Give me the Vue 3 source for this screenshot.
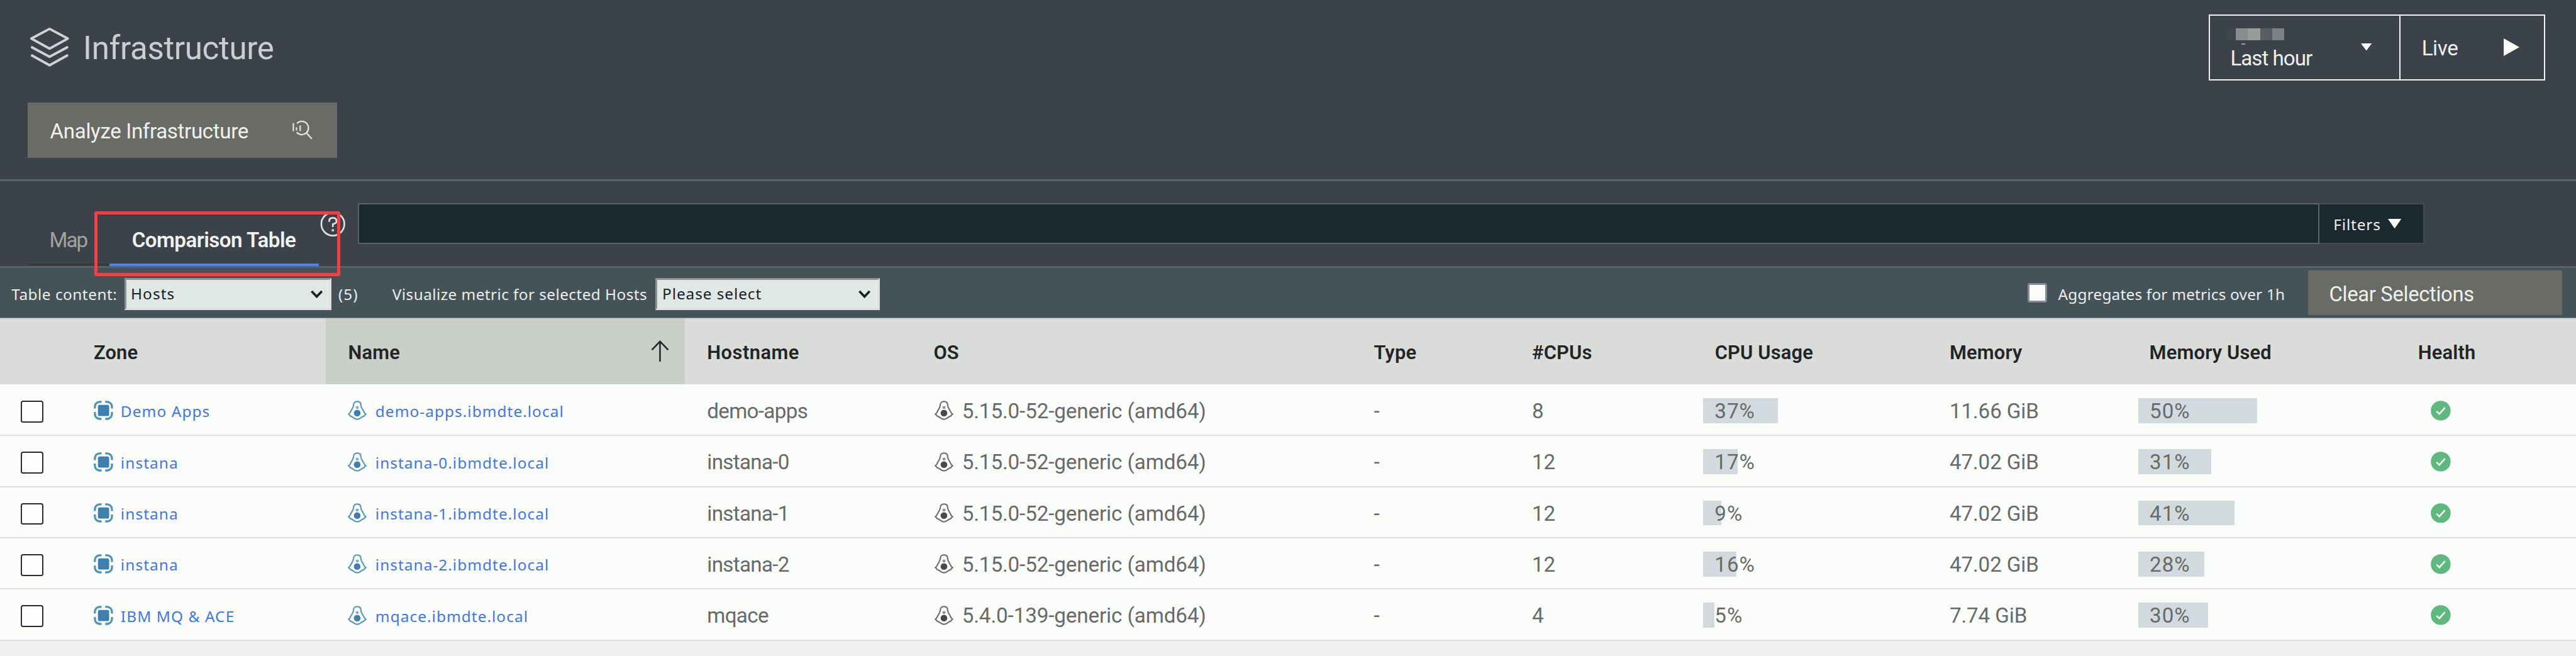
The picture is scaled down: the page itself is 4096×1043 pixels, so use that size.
<script setup>
const columns = [
  { label: 'Zone' }, { label: 'Name', sorted: true }, { label: 'Hostname', cls: 'wide' }, { label: 'OS' },
  { label: 'Type' }, { label: '#CPUs' }, { label: 'CPU Usage' }, { label: 'Memory' },
  { label: 'Memory Used' }, { label: 'Health' },
]
const hosts = [
  { zone: 'Demo Apps', host: 'demo-apps', os: '5.15.0-52-generic (amd64)', cpus: 8, cpu: 37, cpuFill: 36.8, mem: '11.66 GiB', used: 50, usedFill: 50.2 },
  { zone: 'instana', host: 'instana-0', os: '5.15.0-52-generic (amd64)', cpus: 12, cpu: 17, cpuFill: 17.1, mem: '47.02 GiB', used: 31, usedFill: 30.9 },
  { zone: 'instana', host: 'instana-1', os: '5.15.0-52-generic (amd64)', cpus: 12, cpu: 9, cpuFill: 8.95, mem: '47.02 GiB', used: 41, usedFill: 40.8 },
  { zone: 'instana', host: 'instana-2', os: '5.15.0-52-generic (amd64)', cpus: 12, cpu: 16, cpuFill: 16.4, mem: '47.02 GiB', used: 28, usedFill: 28 },
  { zone: 'IBM MQ & ACE', host: 'mqace', os: '5.4.0-139-generic (amd64)', cpus: 4, cpu: 5, cpuFill: 5.5, mem: '7.74 GiB', used: 30, usedFill: 29.7 },
]
const pixels = ['#3e454c', '#888b90', '#989d9b', '#565e61', '#7d8284']
const penguin = 'M9.5 7C9.5 3.4 12 1.5 15.5 1.5S21.500 3.400 21.500 7C21.500 11.500 24.500 14 26.300 17.800C27 19.500 27 20.500 29.600 22.200C27.500 23.300 28 25.600 25.300 26C22 26.800 20.300 30.700 15.500 30.700S9 26.800 5.700 26C3 25.600 3.500 23.300 1.400 22.200C4 20.500 4 19.500 4.700 17.800C6.500 14 9.500 11.500 9.500 7Z'
</script>

<template>
  <div class="page">
    <header class="header">
      <div class="lead">
        <div class="title">
          <svg class="layers" width="66" height="66" viewBox="0 0 66 66" fill="none" stroke="#d0d3d5" stroke-width="4" stroke-linejoin="round" stroke-linecap="round">
            <path d="M33 3L63 19L33 35.500L3 19Z" />
            <path d="M4 33.500L33 49L62 33.500" />
            <path d="M4 47L33 63L62 47" />
          </svg>
          <h1>Infrastructure</h1>
        </div>
        <button class="analyze">
          <span>Analyze Infrastructure</span>
          <svg width="36" height="36" viewBox="0 0 36 36" fill="none" stroke="#e3e5e2" stroke-width="2.300">
            <path d="M8.500 7.500A11 11 0 1 1 8 22" />
            <path d="M24.500 23.500L33 33" />
            <path d="M2.500 7V20.500M13.800 11V20M7.800 14V19" />
          </svg>
        </button>
      </div>
      <div class="time">
        <div class="range">
          <div class="range-text">
            <div class="pixels"><i v-for="p in pixels" :key="p" :style="{ background: p }"></i></div>
            <div class="tick"></div>
            <span>Last hour</span>
          </div>
          <svg width="18" height="12" viewBox="0 0 18 12"><path d="M0 0H18L9 12Z" fill="#fbfcfa" /></svg>
        </div>
        <div class="live">
          <span>Live</span>
          <svg width="26" height="29" viewBox="0 0 26 29"><path d="M0 0L26 14.500L0 29Z" fill="#fbfcfa" /></svg>
        </div>
      </div>
    </header>

    <nav class="tabs">
      <div class="tab map">Map</div>
      <div class="tab active">Comparison Table</div>
      <svg class="help" width="42" height="42" viewBox="0 0 42 42" fill="none" stroke="#dfe2e2" stroke-width="2.800">
        <circle cx="21" cy="21" r="19" />
        <path d="M15 17.500V16C15 13 17 10.800 21 10.800S27 13 27 16.200C27 19.800 23.500 20.800 21 21.200V26" />
        <path d="M21 29.500V33" stroke-width="3.600" />
      </svg>
      <div class="search"></div>
      <div class="filters">
        <span>Filters</span>
        <svg width="22" height="16" viewBox="0 0 22 16"><path d="M0 0H22L11 16Z" fill="#fbfcfa" /></svg>
      </div>
      <div class="highlight"></div>
    </nav>

    <section class="toolbar">
      <label class="l-content">Table content:</label>
      <div class="select hosts">
        <span>Hosts</span>
        <svg width="20" height="14" viewBox="0 0 20 14" fill="none" stroke="#1c1e1f" stroke-width="3.800"><path d="M1.500 2L10 11L18.500 2" /></svg>
      </div>
      <span class="count">(5)</span>
      <label class="l-metric">Visualize metric for selected Hosts</label>
      <div class="select metric">
        <span>Please select</span>
        <svg width="20" height="14" viewBox="0 0 20 14" fill="none" stroke="#1c1e1f" stroke-width="3.800"><path d="M1.500 2L10 11L18.500 2" /></svg>
      </div>
      <i class="agg-box"></i>
      <label class="l-agg">Aggregates for metrics over 1h</label>
      <button class="clear">Clear Selections</button>
    </section>

    <main class="table">
      <div class="thead">
        <div></div>
        <div v-for="c in columns" :key="c.label" class="th" :class="[c.cls, { sorted: c.sorted }]">
          <span>{{ c.label }}</span>
          <svg v-if="c.sorted" width="30" height="36" viewBox="0 0 30 36" fill="none" stroke="#242626" stroke-width="2.600"><path d="M15 36V2M1.500 16L15 2L28.500 16" /></svg>
        </div>
      </div>
      <div class="tbody">
        <div v-for="h in hosts" :key="h.host" class="row">
          <div class="pick"><i></i></div>
          <div class="cell">
            <svg width="32" height="32" viewBox="0 0 32 32" fill="none" stroke="#4f93b5" stroke-width="3.400">
              <rect x="7" y="7" width="18.500" height="18.500" rx="3" fill="#3f7fad" stroke="none" />
              <path d="M1.900 13V10A8 8 0 0 1 9.900 1.900H13M19 1.900H22A8 8 0 0 1 30.100 9.900V13M30.100 18.800V22A8 8 0 0 1 22.100 30.100H19M13 30.100H10A8 8 0 0 1 1.900 22.100V18.800" />
            </svg>
            <a class="link">{{ h.zone }}</a>
          </div>
          <div class="cell">
            <svg width="31" height="32" viewBox="0 0 31 32" fill="none" stroke="#5a98b8" stroke-width="2.300">
              <path :d="penguin" /><circle cx="15.500" cy="20.500" r="5.500" fill="#3f7fad" stroke="none" /><rect x="13.200" y="9" width="4.800" height="4.400" rx="1.500" fill="#7fb0c8" stroke="none" />
            </svg>
            <a class="link name">{{ h.host }}.ibmdte.local</a>
          </div>
          <div class="cell"><span class="text host">{{ h.host }}</span></div>
          <div class="cell os">
            <svg width="31" height="32" viewBox="0 0 31 32" fill="none" stroke="#6f7271" stroke-width="2.300">
              <path :d="penguin" /><circle cx="15.500" cy="20.500" r="5.500" fill="#474a49" stroke="none" /><rect x="13.200" y="9" width="4.800" height="4.400" rx="1.500" fill="#8f9291" stroke="none" />
            </svg>
            <span class="text">{{ h.os }}</span>
          </div>
          <div class="cell"><span class="text">-</span></div>
          <div class="cell"><span class="text">{{ h.cpus }}</span></div>
          <div class="cell meter cpu"><div class="track"><i :style="{ width: h.cpuFill + '%' }"></i><span class="text">{{ h.cpu }}%</span></div></div>
          <div class="cell"><span class="text">{{ h.mem }}</span></div>
          <div class="cell meter mem"><div class="track"><i :style="{ width: h.usedFill + '%' }"></i><span class="text">{{ h.used }}%</span></div></div>
          <div class="cell health">
            <svg width="33" height="33" viewBox="0 0 33 33" fill="none"><circle cx="16.500" cy="16.500" r="16.300" fill="#5fb97e" /><path d="M9.500 17.500L14.300 22L23.500 11.500" stroke="#f5fbf6" stroke-width="2.700" /></svg>
          </div>
        </div>
      </div>
    </main>
  </div>
</template>

<style>
body { margin: 0; overflow: hidden; background: #efefef; }
</style>

<style scoped>
.page {
  zoom: 0.96422;
  width: 4248px;
  height: 1082px;
  overflow: hidden;
  background: #efefef;
  font-family: Roboto, "Liberation Sans", sans-serif;
  white-space: nowrap;
}
.page * { box-sizing: border-box; }
svg { display: block; flex: none; }
i { display: block; }
h1 { margin: 4px 0 0; font-size: 53px; line-height: 64px; font-weight: 400; letter-spacing: -0.0065em; color: #cbced0; }
button { border: 0; border-radius: 0; font-family: inherit; text-align: left; color: #eff1ee; background: #696b67; }

.header { display: flex; justify-content: space-between; height: 299px; background: #3b4249; border-bottom: 3.12px solid #566370; }
.lead { display: flex; flex-direction: column; padding: 45px 0 0 46px; }
.title { display: flex; align-items: center; gap: 22px; height: 66px; padding-left: 3px; }
.analyze { display: flex; align-items: center; justify-content: space-between; width: 509.500px; height: 91px; margin-top: 58px; padding: 0 38px 0 36.500px; font-size: 34.400px; letter-spacing: -0.0113em; }
.analyze span { line-height: 44px; margin-top: 4px; }
.time { display: flex; width: 555px; height: 109px; margin: 23.400px 51px 0 0; border: 2.600px solid #f1f4f1; color: #eef0ee; font-size: 34.400px; }
.range { display: flex; align-items: center; justify-content: space-between; width: 315px; padding: 0 46px 0 27px; border-right: 2.600px solid #f1f4f1; letter-spacing: -0.030em; }
.range-text span { display: block; line-height: 40px; padding-left: 7px; margin-top: 3px; }
.pixels { display: flex; height: 20px; margin-top: 7px; }
.pixels i { width: 20px; }
.pixels i:first-child { width: 16px; }
.tick { width: 6px; height: 2px; margin: 5px 0 0 25px; background: #9a9fa2; }
.live { display: flex; align-items: center; justify-content: space-between; flex: 1; padding: 0 40px 0 34.500px; letter-spacing: -0.0125em; }
.live span { line-height: 44px; margin-top: 5px; }

.tabs { position: relative; display: flex; height: 143px; padding-left: 46px; background: #3b4249; border-bottom: 3.12px solid #566370; }
.tab { align-self: flex-end; height: 85px; line-height: 84px; font-size: 34.400px; border-bottom: 5px solid #3b3a3b; }
.map { width: 134px; padding-left: 35.500px; color: #9fa3a5; letter-spacing: -0.060em; }
.active { width: 346px; padding-left: 37.500px; color: #f0f2f0; font-weight: 600; letter-spacing: -0.0158em; border-color: #4d80f0; }
.help { margin: 49.500px 0 0 2px; }
.search { width: 3235px; height: 67px; margin: 36.500px 0 0 20px; background: #1c2830; border: 2.600px solid #566370; }
.filters { display: flex; align-items: center; width: 173px; height: 67px; margin-top: 36.500px; padding-left: 23px; gap: 12px; background: #1c2830; border: 2.600px solid #434a53; border-left: 0; color: #eef0ee; font-family: "Noto Sans", sans-serif; font-size: 25.300px; letter-spacing: 0.035em; }
.filters span { margin-top: 4px; line-height: 30px; }
.highlight { position: absolute; left: 156px; top: 49px; width: 405.500px; height: 107.500px; border: 6px solid #e64549; border-radius: 3px; z-index: 2; }

.toolbar { display: flex; align-items: center; height: 82.300px; background: #455358; border-bottom: 1.100px solid #7f8a8c; color: #e9edec; font-family: "Noto Sans", sans-serif; font-size: 25.300px; line-height: 34px; }
.toolbar label, .count { margin-top: 6px; }
.l-content { width: 205px; padding-left: 19px; letter-spacing: 0.020em; }
.select { display: flex; align-items: center; justify-content: space-between; height: 53px; margin-top: 4px; padding-right: 12px; background: #e0e8e7; border: 4px solid; border-color: #90918e #dcdddc #dcdddc #90918e; color: #1d1f20; }
.select span { margin-top: 1px; }
.hosts { width: 342px; padding-left: 7.500px; letter-spacing: 0.045em; }
.metric { width: 369.500px; padding-left: 8px; letter-spacing: 0.038em; }
.count { width: 100px; padding-left: 11px; letter-spacing: 0.040em; }
.l-metric { width: 434px; letter-spacing: 0.017em; }
.agg-box { width: 32px; height: 32px; margin-left: auto; background: #fbfdfb; border: 4px solid #878996; border-radius: 4px; }
.l-agg { width: 412px; margin-left: 18px; letter-spacing: 0.008em; }
.clear { width: 419px; height: 73px; margin-right: 23px; padding: 5px 0 0 35px; font-family: Roboto, sans-serif; font-size: 34px; letter-spacing: -0.0100em; }

.thead, .row { display: grid; grid-template-columns: 118px 419.500px 592px 373.500px 726px 261px 301.500px 387px 329.500px 443px 297px; }
.thead { height: 109px; background: #dadcd9; }
.th { display: flex; align-items: center; justify-content: space-between; padding: 0 26px 0 36.500px; font-size: 32px; font-weight: 600; color: #232525; letter-spacing: 0.006em; }
.th span { margin-top: 6px; line-height: 40px; }
.th.wide { letter-spacing: 0.016em; }
.sorted { background: #c9d0c9; }
.tbody { padding-top: 1.600px; background: #fbfdfa; }
.row { height: 84.350px; padding-top: 2px; border-bottom: 2.600px solid #dfe1df; }
.pick { display: flex; align-items: center; padding-left: 34.400px; }
.pick i { width: 37px; height: 36px; margin-top: 3px; border: 2.600px solid #2b2c2d; border-radius: 4px; background: #fdfefd; }
.cell { display: flex; align-items: center; padding-left: 36.500px; }
.link { margin: 4px 0 0 12.500px; font-family: "Noto Sans", sans-serif; font-size: 25.300px; line-height: 32px; letter-spacing: 0.045em; color: #4175f0; }
.name { margin-left: 14px; letter-spacing: 0.043em; }
.text { margin-top: 3px; font-size: 34.400px; line-height: 40px; letter-spacing: -0.003em; color: #686a69; }
.host { letter-spacing: -0.020em; }
.os { padding-left: 38.500px; }
.os .text { margin-left: 14px; }
.cell.cpu { padding-left: 17px; }
.cell.mem { padding-left: 18px; }
.track { position: relative; display: flex; align-items: center; height: 41px; padding-left: 19px; }
.cpu .track { width: 335px; }
.mem .track { width: 390px; }
.track i { position: absolute; left: 0; top: 0; height: 100%; background: #d2dadd; }
.track .text { position: relative; letter-spacing: 0.030em; }
.health { padding-left: 57.400px; }
</style>
